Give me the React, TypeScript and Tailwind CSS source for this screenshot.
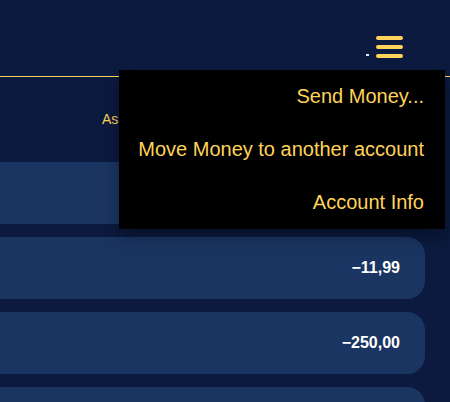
import React from "react";

const Y = "text-[#ffd35a]";

export default function App() {
  return (
    <div
      className="relative w-[450px] h-[402px] overflow-hidden bg-[#0b1a3e]"
      style={{ fontFamily: '"Liberation Sans", Arial, sans-serif' }}
    >
      {/* header */}
      <div className="h-[76px] flex items-start justify-end pr-[47px] pt-[36px]">
        <div className="flex items-end gap-[7px]">
          <span className="w-[3px] h-[2px] mb-[2px] bg-[#cfeeff]" />
          <div className="flex flex-col gap-[5px]">
            <span className="block w-[27px] h-[4px] rounded-full bg-[#ffd35a]" />
            <span className="block w-[27px] h-[4px] rounded-full bg-[#ffd35a]" />
            <span className="block w-[27px] h-[4px] rounded-full bg-[#ffd35a]" />
          </div>
        </div>
      </div>
      <div className="h-px bg-[#ffd35a]" />

      {/* tabs row */}
      <div className="h-[85px] pl-[102px] pt-[30px]">
        <span className={`text-[14px] ${Y}`}>Assets</span>
      </div>

      {/* list */}
      <div className="flex flex-col gap-[13px]">
        <div className="h-[62px] w-[425px] rounded-r-[18px] bg-[#1b3563]" />
        <div className="h-[62px] w-[425px] rounded-r-[18px] bg-[#1b3563] flex items-center justify-end pr-[25px]">
          <span className="text-white font-bold text-[16px]">−11,99</span>
        </div>
        <div className="h-[62px] w-[425px] rounded-r-[18px] bg-[#1b3563] flex items-center justify-end pr-[25px]">
          <span className="text-white font-bold text-[16px]">−250,00</span>
        </div>
        <div className="h-[62px] w-[425px] rounded-r-[18px] bg-[#1b3563] pl-[10px] pt-[10px]">
          <span className={`text-[16px] leading-none ${Y}`}>Lidl Lebensmittel</span>
        </div>
      </div>

      {/* dropdown menu */}
      <div className="absolute left-[119px] top-[70px] w-[326px] bg-black shadow-[0_8px_16px_rgba(0,0,0,0.35)] flex flex-col">
        <div className={`h-[53px] flex items-center justify-end pr-[21px] pb-[2px] text-[20px] ${Y}`}>Send Money...</div>
        <div className={`h-[53px] flex items-center justify-end pr-[21px] pb-[2px] text-[20px] ${Y}`}>Move Money to another account</div>
        <div className={`h-[53px] flex items-center justify-end pr-[21px] pb-[2px] text-[20px] ${Y}`}>Account Info</div>
      </div>
    </div>
  );
}
